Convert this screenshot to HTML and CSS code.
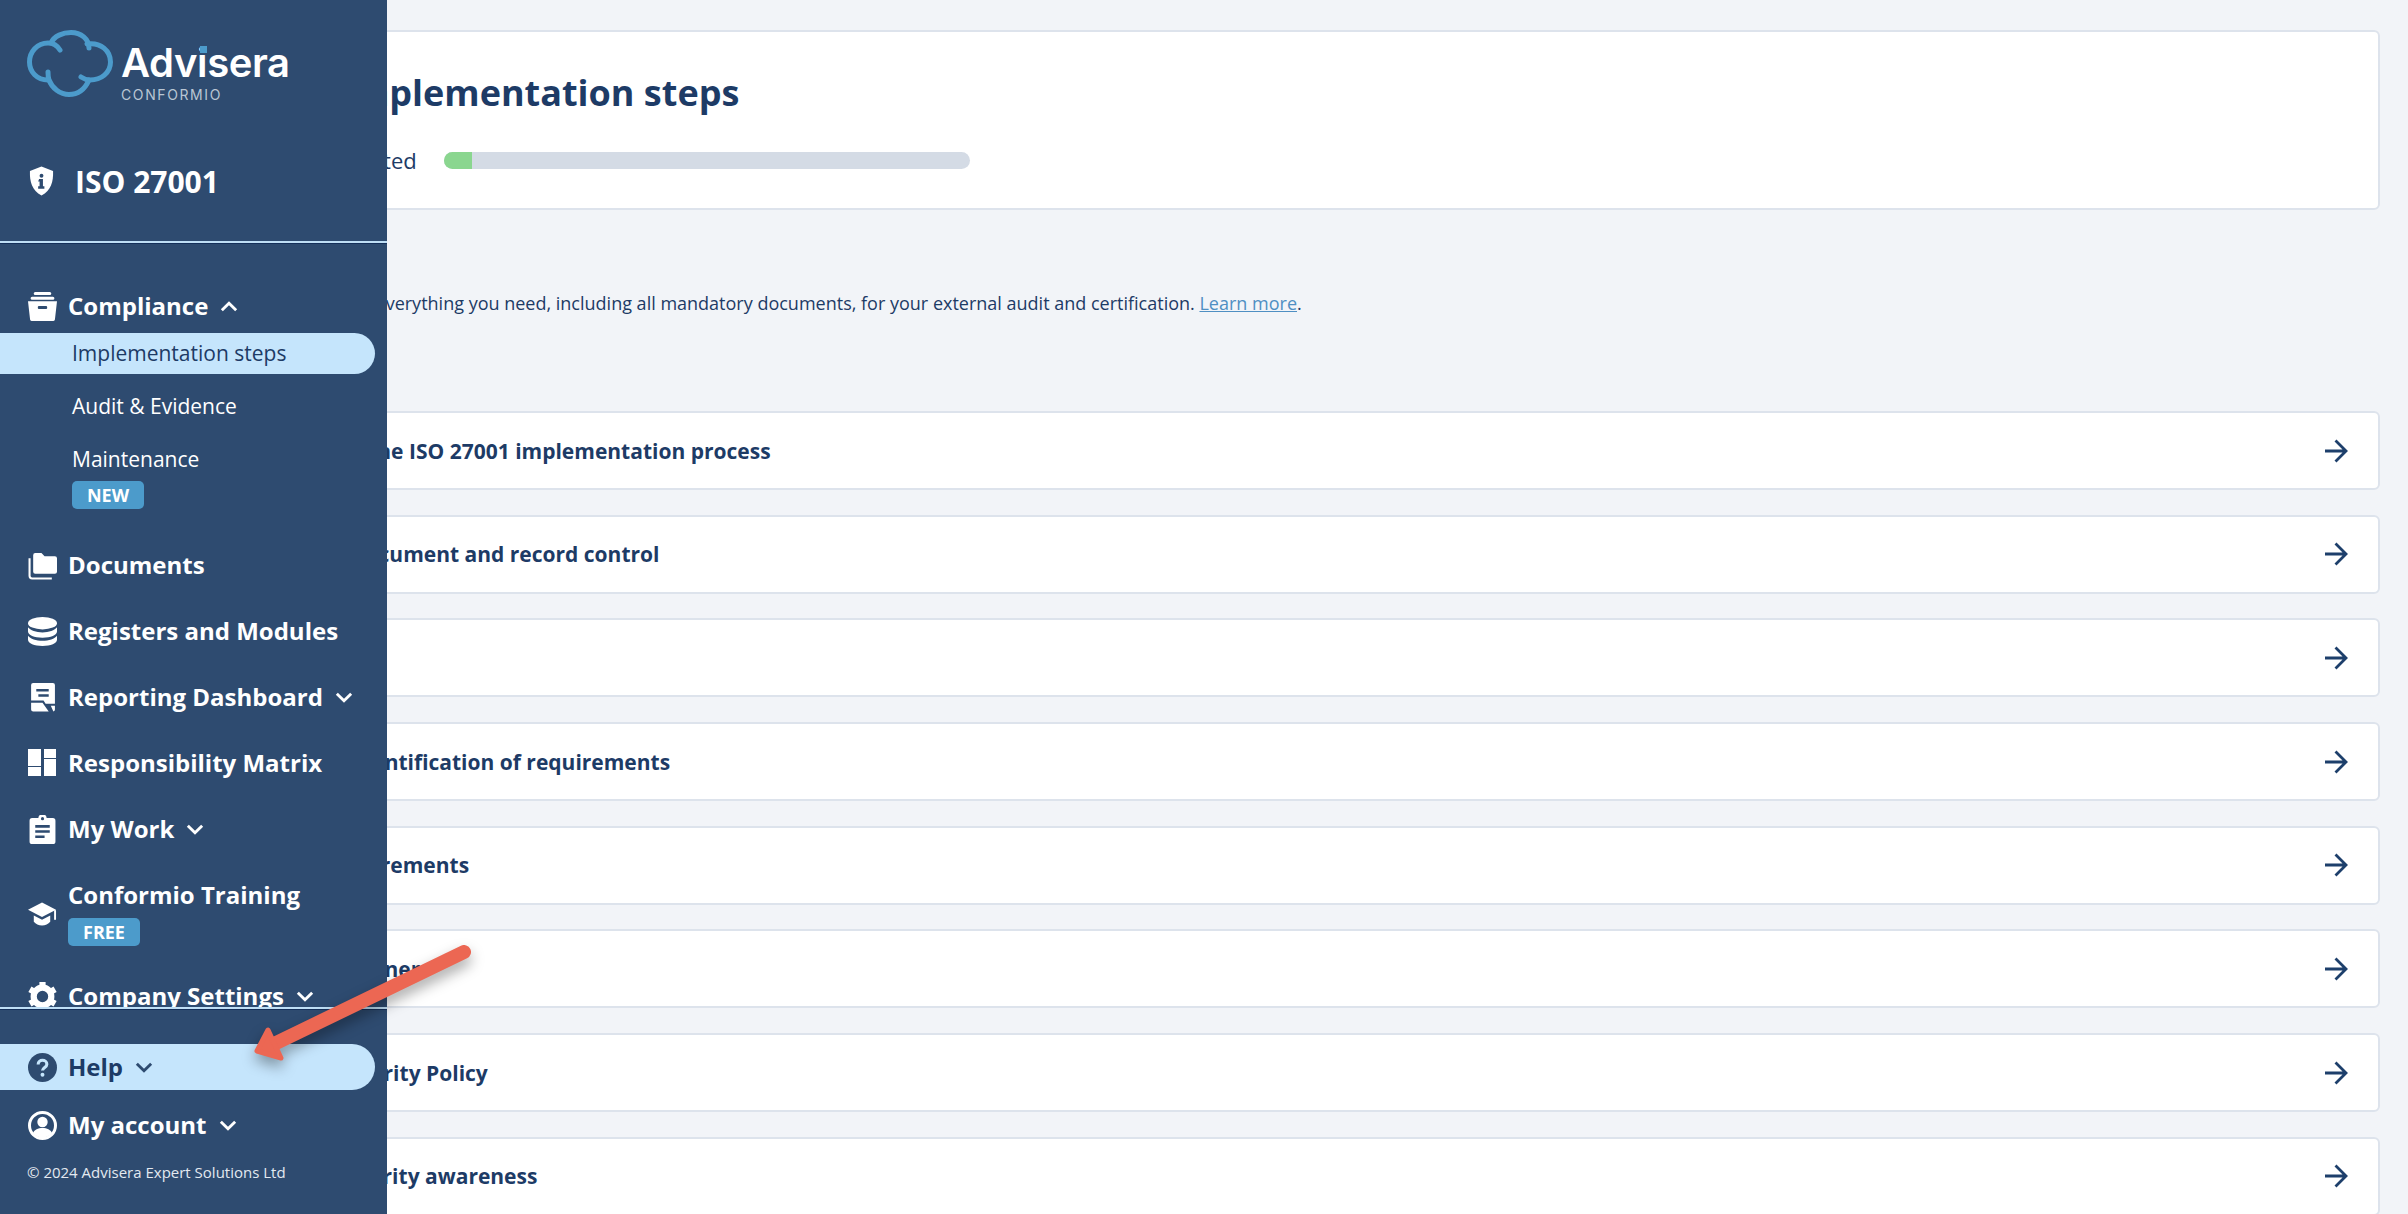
FILE: index.html
```html
<!DOCTYPE html>
<html lang="en">
<head>
<meta charset="utf-8">
<title>Implementation steps</title>
<link rel="stylesheet" href="styles.css">
</head>
<body>
<aside class="sidebar">
  <div class="logo">
    <svg class="logo-cloud" viewBox="0 0 86 67" fill="none" stroke="#4c9bcb" stroke-width="5" stroke-linecap="round"><path d="M33 20C30 15 26 13 21 13C10 13 2.500 22 2.500 32C2.500 42 10 50 21 50"/><path d="M24 13C27 6 36 2.500 44 2.500C54 2.500 62 9 62 18"/><path d="M60 14C74 12 83.500 21 83.500 32C83.500 43 74 50 63 50C60 50 57 49 54 47"/><path d="M62 50C58 59 51 64.500 42 64.500C33 64.500 25 58 22 50C21 47 21 45 21 42"/></svg>
    <div class="logo-words">
      <span class="logo-name">Adv<span class="logo-i">i</span>sera</span>
      <span class="logo-sub">CONFORMIO</span>
    </div>
  </div>
  <div class="product">
    <svg class="product-icon" viewBox="0 0 26 30"><path fill="#fff" d="M13 0L25 4.500C25.500 15 23 25 13 30C3 25 .5 15 1 4.500Z"/><circle cx="13" cy="9.500" r="2" fill="#2e4b70"/><path fill="#2e4b70" d="M10.500 13h4v7.500h1.500v2.500h-6.500v-2.500h1.500v-5h-1.500z"/></svg>
    <span>ISO 27001</span>
  </div>
  <nav class="nav">
    <div class="item">
      <svg class="icon" viewBox="0 0 28 28"><path fill="#fff" d="M7 0h14a1.500 1.500 0 0 1 0 3H7a1.500 1.500 0 0 1 0-3zM4 4.500h20a1.500 1.500 0 0 1 0 3H4a1.500 1.500 0 0 1 0-3zM0 9h28l-2 17.500a2 2 0 0 1-2 1.500H4a2 2 0 0 1-2-1.500z"/><rect x="9.500" y="13.500" width="9" height="3" rx="1" fill="#2e4b70"/></svg>
      <span>Compliance</span>
      <svg class="chev" viewBox="0 0 16 10"><path d="M1.500 8.500L8 2l6.500 6.500"/></svg>
    </div>
    <a class="sub sub-active">Implementation steps</a>
    <a class="sub">Audit &amp; Evidence</a>
    <a class="sub sub-tight">Maintenance</a>
    <span class="badge badge-new">NEW</span>
    <div class="item item-after-badge">
      <svg class="icon" viewBox="0 0 28 28"><path fill="#fff" d="M5 4a2 2 0 0 1 2-2h6l3 3h10a2 2 0 0 1 2 2v13a2 2 0 0 1-2 2H7a2 2 0 0 1-2-2z"/><path fill="none" stroke="#fff" stroke-width="2" d="M1.500 7v17a2.500 2.500 0 0 0 2.500 2.500h19"/></svg>
      <span>Documents</span>
    </div>
    <div class="item">
      <svg class="icon" viewBox="0 0 28 28"><ellipse cx="14" cy="6" rx="14" ry="6" fill="#fff"/><path fill="#fff" d="M0 10c2 3 8 5 14 5s12-2 14-5v4c0 3.500-6 6-14 6S0 17.500 0 14zM0 18c2 3 8 5 14 5s12-2 14-5v4c0 3.500-6 6-14 6S0 25.500 0 22z"/></svg>
      <span>Registers and Modules</span>
    </div>
    <div class="item">
      <svg class="icon" viewBox="0 0 28 28"><path fill="#fff" d="M5 0h19a2 2 0 0 1 2 2v18h-9l-2-3H3V2a2 2 0 0 1 2-2z"/><path fill="#fff" d="M3 19h11l6 8.500H5a2 2 0 0 1-2-2zM22 22h4v3.500a2 2 0 0 1-1.500 2z"/><path stroke="#2e4b70" stroke-width="2.500" d="M8 7h12M10 12h10"/></svg>
      <span>Reporting Dashboard</span>
      <svg class="chev" viewBox="0 0 16 10"><path d="M1.500 1.500L8 8l6.500-6.500"/></svg>
    </div>
    <div class="item">
      <div class="matrix"><i class="m1"></i><i class="m2"></i><i class="m3"></i><i class="m4"></i></div>
      <span>Responsibility Matrix</span>
    </div>
    <div class="item">
      <svg class="icon" viewBox="0 0 28 28"><path fill="#fff" d="M4 3h6a4 4 0 0 1 8 0h6a2.500 2.500 0 0 1 2.500 2.500v20A2.500 2.500 0 0 1 24 28H4a2.500 2.500 0 0 1-2.500-2.500v-20A2.500 2.500 0 0 1 4 3z"/><circle cx="14" cy="3.500" r="1.500" fill="#2e4b70"/><path stroke="#2e4b70" stroke-width="2.500" d="M7 11h14M7 16h14M7 21h9"/></svg>
      <span>My Work</span>
      <svg class="chev" viewBox="0 0 16 10"><path d="M1.500 1.500L8 8l6.500-6.500"/></svg>
    </div>
    <div class="item-double">
      <svg class="icon icon-cap" viewBox="0 0 30 24"><path fill="#fff" d="M14.500 0L29 7.500 14.500 15 0 7.500z"/><path fill="#fff" d="M6 13.500l8.500 4.500 8.500-4.500V20c-2 2.500-5 4-8.500 4S8 22.500 6 20z"/><path stroke="#fff" stroke-width="2" d="M28 8v10"/></svg>
      <div class="stack">
        <span>Conformio Training</span>
        <span class="badge">FREE</span>
      </div>
    </div>
    <div class="item">
      <svg class="icon" viewBox="0 0 28 28"><circle cx="14" cy="14" r="8.500" fill="none" stroke="#fff" stroke-width="6"/><g fill="#fff"><rect x="11" y="0" width="6" height="5"/><rect x="11" y="23" width="6" height="5"/><rect x="11" y="0" width="6" height="5" transform="rotate(60 14 14)"/><rect x="11" y="0" width="6" height="5" transform="rotate(120 14 14)"/><rect x="11" y="0" width="6" height="5" transform="rotate(240 14 14)"/><rect x="11" y="0" width="6" height="5" transform="rotate(300 14 14)"/></g></svg>
      <span>Company Settings</span>
      <svg class="chev" viewBox="0 0 16 10"><path d="M1.500 1.500L8 8l6.500-6.500"/></svg>
    </div>
  </nav>
  <div class="foot">
    <div class="help">
      <svg class="icon" viewBox="0 0 28 28"><circle cx="14" cy="14" r="14" fill="#2e4b70"/><path fill="none" stroke="#c5e5fc" stroke-width="3" d="M9.800 11c0-2.500 2-4 4.200-4s4.200 1.500 4.200 3.800c0 3-4.200 3.200-4.200 6.200"/><circle cx="14" cy="21" r="1.900" fill="#c5e5fc"/></svg>
      <span>Help</span>
      <svg class="chev chev-dark" viewBox="0 0 16 10"><path d="M1.500 1.500L8 8l6.500-6.500"/></svg>
    </div>
    <div class="item item-account">
      <svg class="icon" viewBox="0 0 29 29"><circle cx="14.500" cy="14.500" r="13" fill="#2e4b70" stroke="#fff" stroke-width="3"/><circle cx="14.500" cy="11" r="5.200" fill="#fff"/><path fill="#fff" d="M5 22c1.500-3.500 5-5 9.500-5s8 1.500 9.500 5c-2.500 3-5.500 4.500-9.500 4.500S7.500 25 5 22z"/></svg>
      <span>My account</span>
      <svg class="chev" viewBox="0 0 16 10"><path d="M1.500 1.500L8 8l6.500-6.500"/></svg>
    </div>
    <p class="copy">© 2024 Advisera Expert Solutions Ltd</p>
  </div>
</aside>

<main class="main">
  <section class="head-card">
    <h1>Implementation steps</h1>
    <div class="progress-line">
      <span class="progress-label">Started</span>
      <div class="track"><div class="fill"></div></div>
    </div>
  </section>
  <p class="intro">Find everything you need, including all mandatory documents, for your external audit and certification. <a class="learn">Learn more</a>.</p>
  <div class="rows">
    <div class="row"><span class="s1">Use the ISO 27001 implementation process</span><svg class="arrow" viewBox="0 0 24 24"><path d="M1 12h21M11.500 1.500L22 12 11.500 22.500"/></svg></div>
    <div class="row"><span class="s2">Document and record control</span><svg class="arrow" viewBox="0 0 24 24"><path d="M1 12h21M11.500 1.500L22 12 11.500 22.500"/></svg></div>
    <div class="row"><span></span><svg class="arrow" viewBox="0 0 24 24"><path d="M1 12h21M11.500 1.500L22 12 11.500 22.500"/></svg></div>
    <div class="row"><span class="s4">Identification of requirements</span><svg class="arrow" viewBox="0 0 24 24"><path d="M1 12h21M11.500 1.500L22 12 11.500 22.500"/></svg></div>
    <div class="row"><span class="s5">Requirements</span><svg class="arrow" viewBox="0 0 24 24"><path d="M1 12h21M11.500 1.500L22 12 11.500 22.500"/></svg></div>
    <div class="row"><span class="s6">Partner</span><svg class="arrow" viewBox="0 0 24 24"><path d="M1 12h21M11.500 1.500L22 12 11.500 22.500"/></svg></div>
    <div class="row"><span class="s7">Security Policy</span><svg class="arrow" viewBox="0 0 24 24"><path d="M1 12h21M11.500 1.500L22 12 11.500 22.500"/></svg></div>
    <div class="row"><span class="s8">Security awareness</span><svg class="arrow" viewBox="0 0 24 24"><path d="M1 12h21M11.500 1.500L22 12 11.500 22.500"/></svg></div>
  </div>
</main>

<svg class="pointer" viewBox="0 0 240 130"><path d="M224 15L34 107" fill="none" stroke="#ec6753" stroke-width="14" stroke-linecap="round"/><path d="M28 93L17 114 41 121Z" fill="#ec6753" stroke="#ec6753" stroke-width="5" stroke-linejoin="round"/></svg>
</body>
</html>
```
FILE: styles.css
```css
* { box-sizing: border-box; }
html, body { margin: 0; height: 1214px; overflow: hidden; }
body { background: #f2f4f8; color: #1d3b66; font-family: "Open Sans", "Liberation Sans", sans-serif; }

.sidebar {
  position: absolute; left: 0; top: 0; z-index: 2;
  width: 387px; height: 1214px;
  background: #2e4b70; color: #fff;
  display: flex; flex-direction: column;
}
.logo { display: flex; align-items: flex-start; height: 141px; padding: 30px 0 0 27px; }
.logo-cloud { width: 86px; height: 67px; flex: none; }
.logo-words { display: flex; flex-direction: column; margin-left: 8px; padding-top: 8px; }
.logo-name { font-family: Inter, sans-serif; font-weight: 600; font-size: 40px; line-height: 50px; letter-spacing: -.4px; }
.logo-i { position: relative; }
.logo-i::after { content: ""; position: absolute; left: 2.500px; top: 8px; width: 7px; height: 7px; background: #4c9bcb; }
.logo-sub { font-family: Inter, sans-serif; font-size: 14px; line-height: 14px; letter-spacing: 1.600px; color: #b9c6d4; }

.product { display: flex; align-items: center; height: 102px; padding-left: 29px; font-size: 30px; font-weight: 700; gap: 21px; padding-bottom: 20px; border-bottom: 2px solid #bfdff6; box-shadow: 0 1px 0 #15305a; }
.product-icon { width: 25px; height: 30px; flex: none; }

.nav { flex: none; height: 766px; overflow: hidden; border-bottom: 2px solid #bfdff6; box-shadow: 0 1px 0 #15305a; padding-top: 43px; }
.item, .help { display: flex; align-items: center; height: 40px; padding-left: 28px; font-size: 24px; font-weight: 700; line-height: 40px; }
.item + .item, .item + .item-double { margin-top: 26px; }
.icon { width: 29px; height: 29px; flex: none; margin-right: 11px; }
.chev { width: 18px; height: 11px; flex: none; margin-left: 12px; fill: none; stroke: #fff; stroke-width: 2.600; }
.chev-dark { stroke: #2e4b70; }

.sub { display: block; height: 41px; line-height: 41px; padding-left: 72px; font-size: 21px; color: #fff; margin-top: 12px; width: 375px; }
.item + .sub { margin-top: 7px; }
.sub-active { background: #c5e5fc; color: #1d3b66; border-radius: 0 21px 21px 0; }
.sub-tight { margin-bottom: 1px; }
.badge { display: inline-block; width: 72px; height: 28px; line-height: 28px; border-radius: 5px; background: #4c9bcb; color: #fff; font-size: 18px; font-weight: 700; text-align: center; }
.badge-new { display: block; margin-left: 72px; }
.item-after-badge { margin-top: 36px; }

.matrix { width: 29px; height: 29px; flex: none; margin-right: 11px; display: grid; grid-template-columns: 13px 12px; grid-template-rows: 9px 7px 9px; gap: 1px 3px; }
.matrix i { background: #fff; display: block; }
.m1 { grid-area: 1 / 1 / 3 / 2; }
.m2 { grid-area: 1 / 2 / 2 / 3; }
.m3 { grid-area: 3 / 1 / 4 / 2; }
.m4 { grid-area: 2 / 2 / 4 / 3; }

.item-double { display: flex; align-items: center; padding-left: 28px; font-size: 24px; font-weight: 700; line-height: 40px; }
.icon-cap { height: 24px; margin-top: 6px; }
.stack { display: flex; flex-direction: column; align-items: flex-start; }
.stack .badge { margin-top: 3px; }
.item-double + .item { margin-top: 30px; }

.foot { padding-top: 35px; }
.help { width: 375px; height: 46px; background: #c5e5fc; color: #1d3b66; border-radius: 0 23px 23px 0; }
.item-account { margin-top: 15px; }
.copy { margin: 15px 0 0 27px; font-size: 15px; line-height: 24px; color: #e3e9f0; }

.main { padding: 30px 28px 0 300px; }
.head-card { height: 180px; background: #fff; border: 2px solid #dde3ec; border-radius: 6px; padding: 0 0 0 40px; }
.head-card h1 { margin: 0; padding-top: 37px; font-size: 36px; line-height: 48px; font-weight: 700; }
.progress-line { display: flex; align-items: center; margin-top: 27px; height: 32px; font-size: 22px; }
.progress-label { width: 102px; flex: none; padding-right: 31px; text-align: right; white-space: nowrap; }
.track { width: 526px; height: 17px; background: #d4dbe5; border-radius: 9px; overflow: hidden; }
.fill { width: 28px; height: 100%; background: #8ad68f; }
.intro { margin: 81px 0 0 35px; font-size: 18px; line-height: 24px; color: #1d3b66; }
.learn { color: #4f8fc3; text-decoration: underline; }

.rows { margin-top: 96px; display: flex; flex-direction: column; gap: 24.700px; }
.row { flex: none; display: flex; align-items: center; justify-content: space-between; height: 79px; background: #fff; border: 2px solid #dde3ec; border-radius: 6px; padding: 0 30px 0 0; font-size: 21px; font-weight: 700; }
.s1 { margin-left: 22px; }
.s2 { margin-left: 48px; }
.s4 { margin-left: 50px; }
.s5 { margin-left: 19px; }
.s6 { margin-left: 38px; }
.s7 { margin-left: 33px; }
.s8 { margin-left: 32px; }
.arrow { width: 24px; height: 24px; flex: none; fill: none; stroke: #1d3f6b; stroke-width: 2.800; }

.pointer { position: absolute; z-index: 3; left: 240px; top: 937px; width: 240px; height: 130px; filter: drop-shadow(0 7px 7px rgba(0,0,0,.35)); }
```
